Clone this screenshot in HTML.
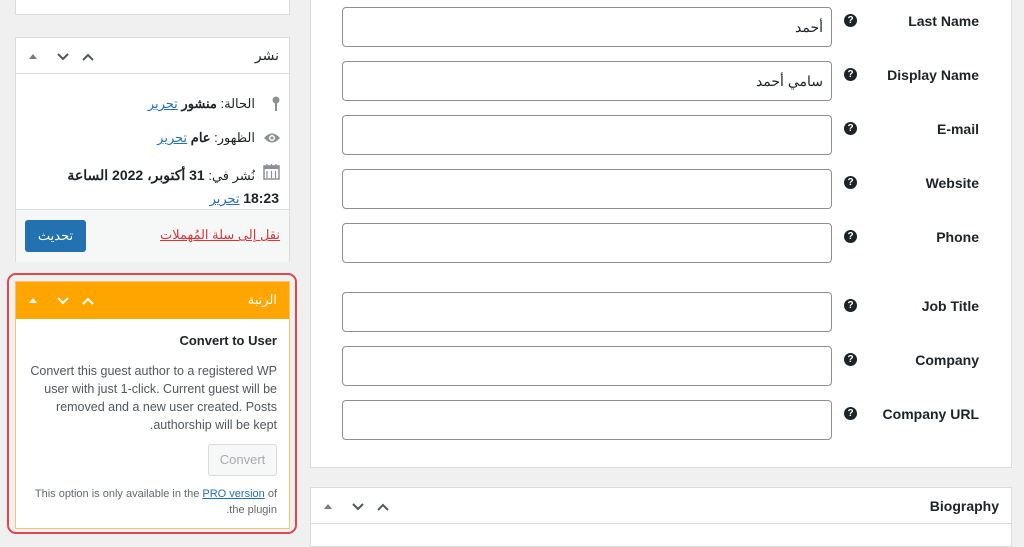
<!DOCTYPE html>
<html><head><meta charset="utf-8"><style>
*{box-sizing:border-box;margin:0;padding:0}
body{width:1024px;height:537px;overflow:hidden;background:#f0f0f1;font-family:"Liberation Sans","Noto Sans CJK SC",sans-serif;color:#1d2327;position:relative;font-size:13px}
.a{position:absolute}
.box{position:absolute;background:#fff;border:1px solid #dcdcde}
.inp{position:absolute;left:342px;width:490px;height:40px;border:1px solid #8c8f94;border-radius:4px;background:#fff;font-size:14px;text-align:right;padding:11px 8px;direction:rtl}
.lbl{position:absolute;right:45px;font-weight:bold;font-size:14px;text-align:right}
.q{position:absolute;left:844px;width:13px;height:13px;border-radius:50%;background:#1d2327;color:#fff;font-size:10px;font-weight:bold;text-align:center;line-height:13px}
a{color:#2271b1}
</style></head><body>
<div class="box" style="left:15px;top:-2px;width:275px;height:17px"></div>
<!-- publish -->
<div class="box" style="left:15px;top:37px;width:275px;height:225px">
 <div style="height:36px;border-bottom:1px solid #dcdcde;position:relative">
  <div class="a" style="right:10px;top:9px;font-size:14px;direction:rtl">نشر</div>
  <svg class="a" style="left:12px;top:12px" width="70" height="14"><path d="M1 9l4-5 4 5z" fill="#787c82"/><path d="M30 4l5 5 5-5" stroke="#50575e" stroke-width="2" fill="none"/><path d="M55 10l5-5 5 5" stroke="#50575e" stroke-width="2" fill="none"/></svg>
 </div>
 <div class="a" style="right:34px;top:58px;direction:rtl">الحالة: <b>منشور</b> <a href="#">تحرير</a></div>
 <svg class="a" style="right:9px;top:58px" width="8" height="16"><circle cx="4" cy="4" r="3.5" fill="#8c8f94"/><rect x="3" y="6" width="2" height="9" fill="#8c8f94"/></svg>
 <div class="a" style="right:34px;top:92px;direction:rtl">الظهور: <b>عام</b> <a href="#">تحرير</a></div>
 <svg class="a" style="right:8px;top:94px" width="18" height="12"><path d="M1 6Q9 -3 17 6Q9 15 1 6z" fill="#8c8f94"/><circle cx="9" cy="6" r="3" fill="#fff"/><circle cx="9" cy="6" r="1.5" fill="#8c8f94"/></svg>
 <div class="a" style="right:10px;top:126px;direction:rtl;width:260px;line-height:22px;text-align:right;text-indent:24px">نُشر في: <b style="font-size:14px">31 أكتوبر، 2022 الساعة</b><br><b style="font-size:14px">18:23</b> <a href="#">تحرير</a></div>
 <svg class="a" style="right:9px;top:125px" width="17" height="17"><rect x="1" y="3" width="15" height="13" fill="none" stroke="#8c8f94" stroke-width="1.5"/><rect x="1" y="3" width="15" height="3" fill="#8c8f94"/><path d="M4 1v4M8.5 1v4M13 1v4M4 8v7M8.5 8v7M12.5 8v7" stroke="#8c8f94" stroke-width="1.2"/></svg>
 <div class="a" style="left:0;top:171px;width:273px;height:53px;background:#f6f7f7;border-top:1px solid #dcdcde">
  <div class="a" style="left:9px;top:10px;width:61px;height:32px;background:#2271b1;border-radius:3px;color:#fff;text-align:center;line-height:32px">تحديث</div>
  <div class="a" style="right:9px;top:17px;color:#d63638;text-decoration:underline;direction:rtl">نقل إلى سلة المُهملات</div>
 </div>
</div>
<!-- red outline -->
<div class="a" style="left:7px;top:273px;width:290px;height:261px;border:2px solid #e0474c;border-radius:9px"></div>
<div class="a" style="left:15px;top:281px;width:275px;height:248px;background:#fff;border:1px solid #f0c674">
 <div style="height:37px;background:#ffa500;position:relative">
  <div class="a" style="right:12px;top:10px;color:#fff;font-size:13px;direction:rtl">الرتبة</div>
  <svg class="a" style="left:12px;top:12px" width="70" height="14"><path d="M1 9l4-5 4 5z" fill="#fff"/><path d="M30 4l5 5 5-5" stroke="#fff" stroke-width="2" fill="none"/><path d="M55 10l5-5 5 5" stroke="#fff" stroke-width="2" fill="none"/></svg>
 </div>
 <div class="a" style="right:12px;top:51px;font-weight:bold;font-size:13px">Convert to User</div>
 <div class="a" style="right:12px;top:80px;width:255px;text-align:right;color:#50575e;font-size:12.5px;line-height:18px;direction:rtl">Convert this guest author to a registered WP user with just 1-click. Current guest will be removed and a new user created. Posts authorship will be kept.</div>
 <div class="a" style="right:12px;top:162px;width:69px;height:32px;border:1px solid #dcdcde;background:#f6f7f7;border-radius:3px;color:#a7aaad;text-align:center;line-height:30px">Convert</div>
 <div class="a" style="right:12px;top:204px;width:250px;text-align:right;color:#646970;font-size:11px;line-height:16px;direction:rtl">This option is only available in the <a href="#">PRO version</a> of the plugin.</div>
</div>
<!-- main -->
<div class="box" style="left:310px;top:-2px;width:702px;height:470px"></div>
<div class="inp" style="top:7px">أحمد</div><div class="q" style="top:14px">?</div><div class="lbl" style="top:13px">Last Name</div>
<div class="inp" style="top:61px">سامي أحمد</div><div class="q" style="top:68px">?</div><div class="lbl" style="top:67px">Display Name</div>
<div class="inp" style="top:115px"></div><div class="q" style="top:122px">?</div><div class="lbl" style="top:121px">E-mail</div>
<div class="inp" style="top:169px"></div><div class="q" style="top:176px">?</div><div class="lbl" style="top:175px">Website</div>
<div class="inp" style="top:223px"></div><div class="q" style="top:230px">?</div><div class="lbl" style="top:229px">Phone</div>
<div class="inp" style="top:292px"></div><div class="q" style="top:299px">?</div><div class="lbl" style="top:298px">Job Title</div>
<div class="inp" style="top:346px"></div><div class="q" style="top:353px">?</div><div class="lbl" style="top:352px">Company</div>
<div class="inp" style="top:400px"></div><div class="q" style="top:407px">?</div><div class="lbl" style="top:406px">Company URL</div>
<div class="box" style="left:310px;top:487px;width:702px;height:60px">
 <div style="height:36px;border-bottom:1px solid #dcdcde;position:relative">
  <div class="a" style="right:12px;top:10px;font-weight:bold;font-size:14px">Biography</div>
  <svg class="a" style="left:12px;top:12px" width="70" height="14"><path d="M1 9l4-5 4 5z" fill="#787c82"/><path d="M30 4l5 5 5-5" stroke="#50575e" stroke-width="2" fill="none"/><path d="M55 10l5-5 5 5" stroke="#50575e" stroke-width="2" fill="none"/></svg>
 </div>
</div>
</body></html>
